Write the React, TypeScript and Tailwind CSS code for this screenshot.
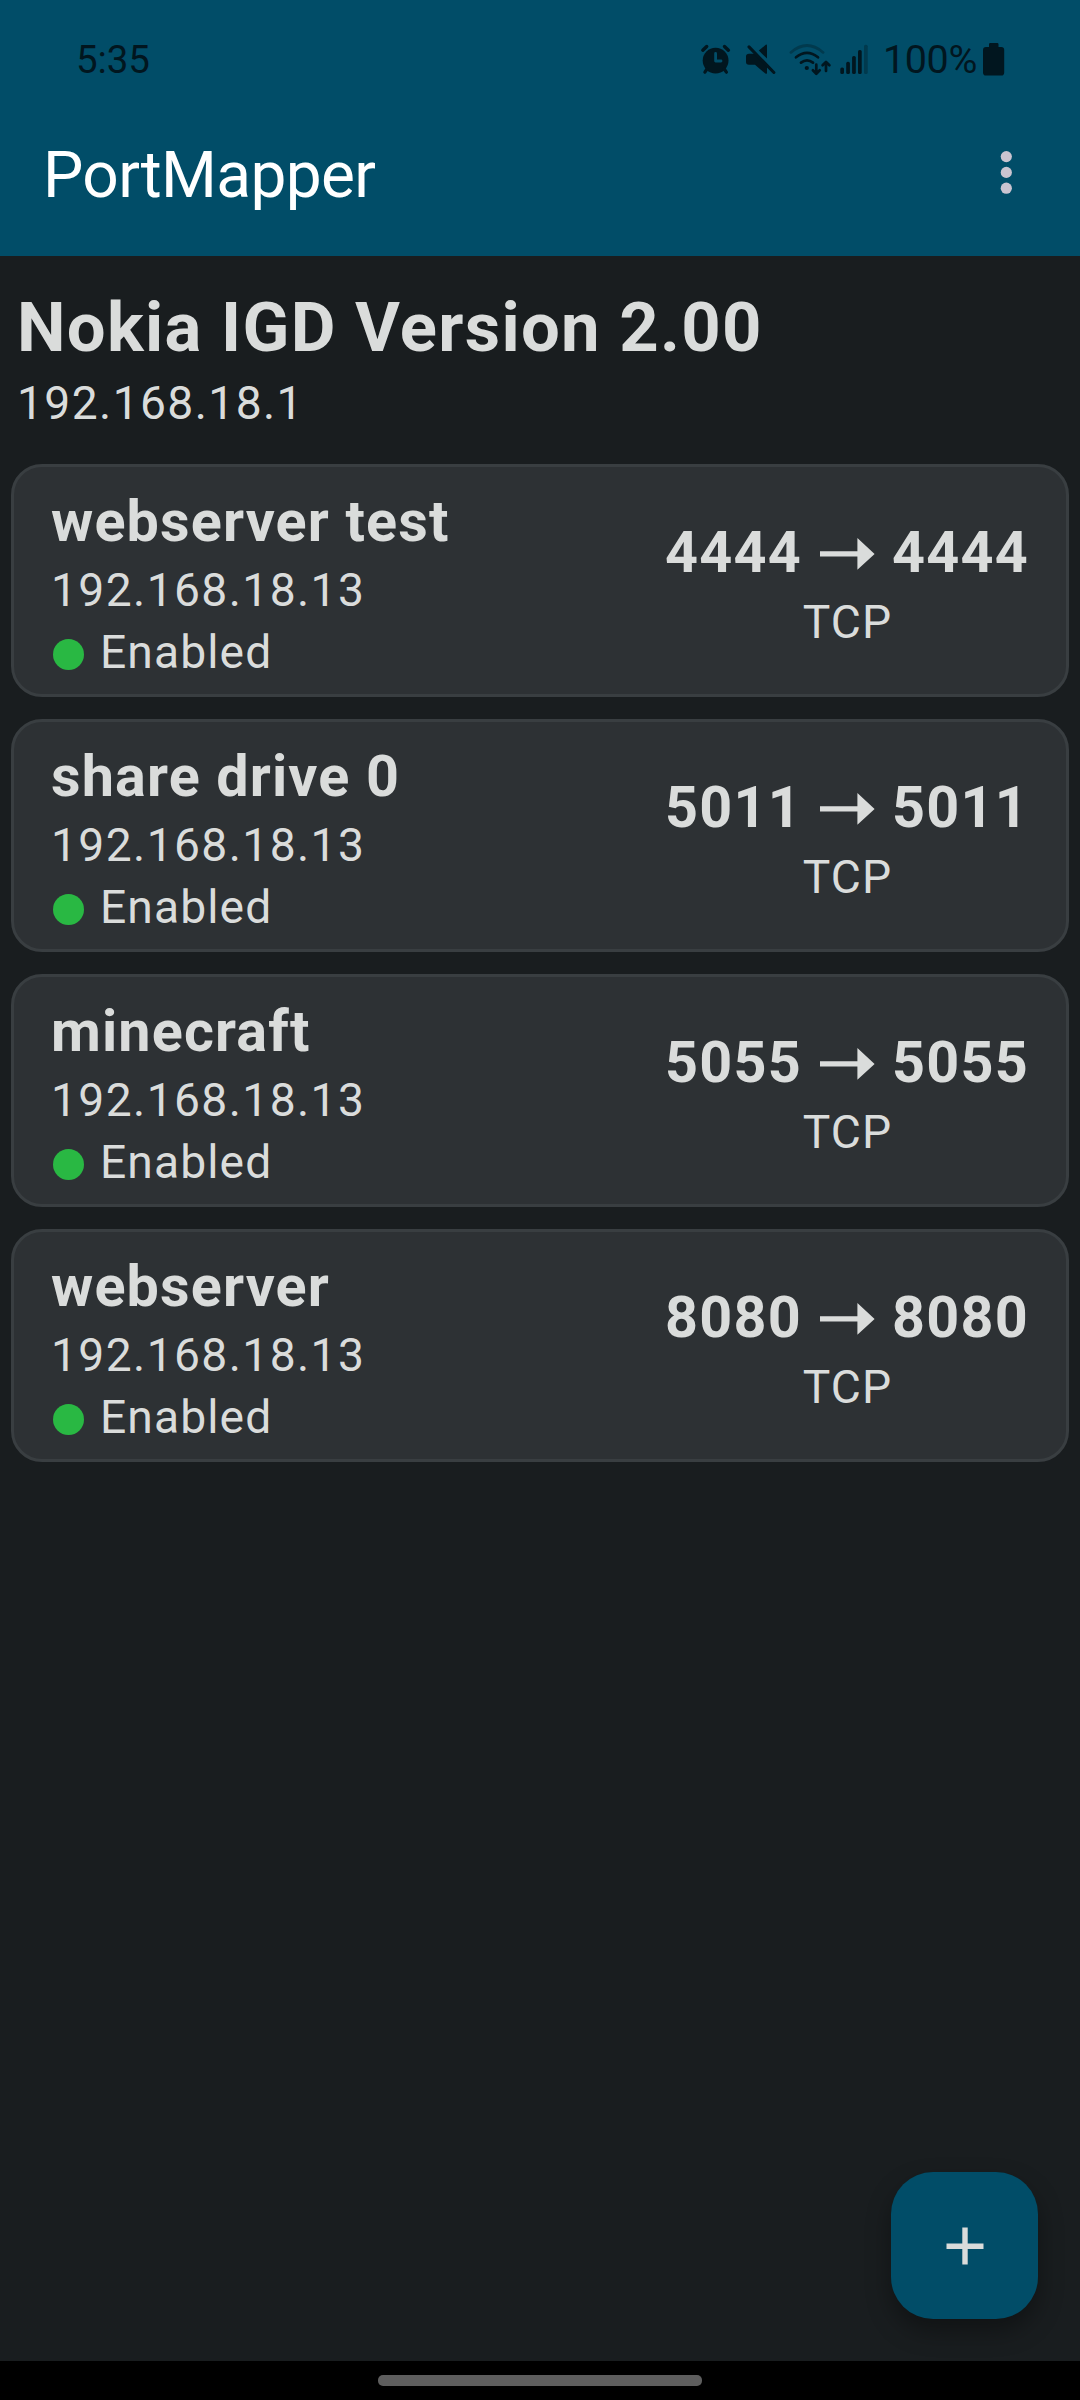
import React from "react";

const rules = [
  { name: "webserver test", port: "4444" },
  { name: "share drive 0", port: "5011" },
  { name: "minecraft", port: "5055" },
  { name: "webserver", port: "8080" },
];

function StatusIcons() {
  return (
    <svg width="176" height="40" viewBox="0 0 176 40" className="mt-[40px] block shrink-0">
      {/* alarm clock */}
      <g fill="#01161f" stroke="#01161f" strokeLinecap="round">
        <circle cx="15.6" cy="20.6" r="12.9" stroke="none" />
        <path d="M2.8 10.2 L6.7 6.5 M28.4 10.2 L24.5 6.5" strokeWidth="3.4" />
        <path d="M7 29 L4.9 32.2 M24.2 29 L26.4 32.2" strokeWidth="3.2" />
      </g>
      <path d="M15.6 13.5 V21 H21" fill="none" stroke="#014d68" strokeWidth="2.8" strokeLinecap="round" strokeLinejoin="round" />
      {/* muted speaker */}
      <g fill="#01161f">
        <path d="M58.8 10.6 L65.8 4.7 Q67 4.2 67 5.6 V18.6 Z" />
        <path d="M49 13.8 H55.5 L67 25 V32.8 Q66.8 34.6 65.4 33.6 L55 24.8 H49 Q46 24.8 46 22 V16.6 Q46 13.8 49 13.8 Z" />
        <path d="M49 6.9 L73.9 32.5" stroke="#01161f" strokeWidth="3" strokeLinecap="round" />
      </g>
      {/* wifi with transfer arrows */}
      <g fill="none" stroke="#01161f" strokeWidth="2.7" strokeLinecap="round">
        <path d="M90.9 12.4 Q107 -1.4 123.1 12.4" stroke="#013a4e" />
        <path d="M96 17.3 Q107 8.5 118 17.3" />
        <path d="M101 22.6 Q107 18 113 22.6" />
        <path d="M116.3 24.7 V33 M112.9 30.3 L116.3 33.7 L119.7 30.3 M126 31 V22.5 M122.6 25.3 L126 21.9 L129.4 25.3" strokeLinejoin="round" />
      </g>
      <circle cx="106.8" cy="28" r="2.1" fill="#01161f" />
      {/* signal strength */}
      <g fill="#01161f">
        <rect x="140.3" y="27.4" width="3.7" height="6.7" rx="1.6" />
        <rect x="146.2" y="21.8" width="3.7" height="12.3" rx="1.6" />
        <rect x="152.1" y="15.9" width="3.7" height="18.2" rx="1.6" />
        <rect x="158" y="10" width="3.7" height="24.1" rx="1.6" />
        <rect x="164" y="4.7" width="3.7" height="29.4" rx="1.6" fill="#013a4e" />
      </g>
    </svg>
  );
}

function RuleCard({ name, port }: { name: string; port: string }) {
  return (
    <section className="flex h-[233px] items-start justify-between rounded-[31px] border-[3px] border-[#393e41] bg-[#2d3134] pr-[37px] pl-[37px]">
      <div className="pt-[21px]">
        <h2 className="h-[75px] text-[57.5px] leading-[67px] font-bold tracking-[1.15px]">{name}</h2>
        <p className="h-[62px] leading-[54px]">192.168.18.13</p>
        <p className="flex h-[54px] items-start leading-[54px] tracking-[1.1px]">
          <span className="mt-[14px] mr-[16px] ml-[2px] size-[31px] rounded-full bg-[#29b843]" />
          Enabled
        </p>
      </div>
      <div className="flex flex-col items-center pt-[52px]">
        <div className="flex h-[76px] items-start text-[57.5px] leading-[67px] font-bold tracking-[1.25px]">
          {port}
          <svg width="55" height="32" viewBox="0 0 55 32" className="mt-[19px] mr-[17px] ml-[18px]" fill="#dadcdb">
            <path d="M0 13.2 H37.4 V0 L54.6 15.9 L37.4 31.8 V18.4 H0 Z" />
          </svg>
          {port}
        </div>
        <div className="pl-[1px] leading-[54px] tracking-[1.1px]">TCP</div>
      </div>
    </section>
  );
}

export default function App() {
  return (
    <div className="flex h-[2400px] w-[1080px] flex-col overflow-hidden bg-[#191d1f] font-[Roboto,sans-serif] text-[46.2px] tracking-[1.4px] text-[#dadcdb]">
      <header className="h-[256px] bg-[#014d68]">
        <div className="flex h-[138px] items-start pr-[75px] pl-[76px] text-[#01161f]">
          <span className="mt-[37px] grow text-[38.5px] leading-[45px] tracking-[-0.1px]">5:35</span>
          <StatusIcons />
          <span className="mt-[36px] ml-[7px] w-[94px] text-[39.5px] leading-[47px] font-normal tracking-[-0.4px]">100%</span>
          <svg width="22" height="34" viewBox="0 0 22 34" className="mt-[42px] ml-[6px] shrink-0" fill="#01161f">
            <path d="M7.3 1 H14.3 Q15.5 1 15.5 2.2 V5 H18.2 Q21.2 5 21.2 8 V30.5 Q21.2 33.6 18.2 33.6 H3 Q0 33.6 0 30.5 V8 Q0 5 3 5 H6 V2.2 Q6 1 7.3 1 Z" />
          </svg>
        </div>
        <div className="flex items-start justify-between pr-[68px] pl-[43px]">
          <h1 className="text-[64px] leading-[75px] tracking-[-0.65px] text-white">PortMapper</h1>
          <svg width="12" height="44" viewBox="0 0 12 44" className="mt-[12px]" fill="#cac4d0">
            <circle cx="6.3" cy="6.6" r="5.6" />
            <circle cx="6.3" cy="22.4" r="5.6" />
            <circle cx="6.3" cy="38.2" r="5.6" />
          </svg>
        </div>
      </header>
      <main className="grow px-[11px] pt-[31px]">
        <div className="h-[177px] pl-[6px]">
          <h2 className="h-[89px] text-[68.8px] leading-[81px] font-bold tracking-[1.3px]">Nokia IGD Version 2.00</h2>
          <p className="leading-[54px]">192.168.18.1</p>
        </div>
        <div className="flex flex-col gap-[22px]">
          {rules.map((r) => (
            <RuleCard key={r.name} {...r} />
          ))}
        </div>
      </main>
      <div className="flex justify-end pr-[42px] pb-[42px]">
        <button className="flex size-[147px] items-center justify-center rounded-[42px] bg-[#014d68] shadow-[0_12px_24px_rgba(0,0,0,0.35)]">
          <svg width="38" height="38" viewBox="0 0 38 38" fill="#dadcdb">
            <path d="M16.3 0.5 H21.7 V16.5 H37.5 V21.9 H21.7 V37.5 H16.3 V21.9 H0.5 V16.5 H16.3 Z" />
          </svg>
        </button>
      </div>
      <footer className="flex h-[39px] justify-center bg-black pt-[14px]">
        <div className="h-[11px] w-[324px] rounded-[5px] bg-[#5e5e5e]" />
      </footer>
    </div>
  );
}
